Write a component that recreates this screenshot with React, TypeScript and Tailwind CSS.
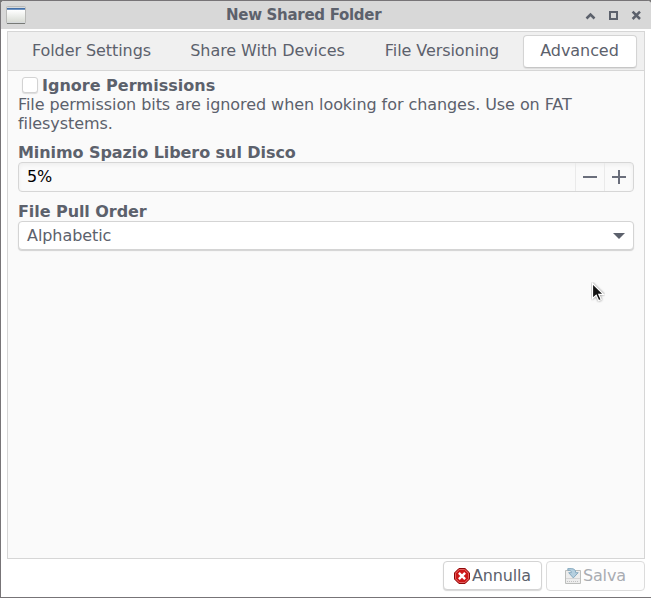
import type { ReactNode } from "react";

function WindowIcon() {
  return (
    <svg width="20" height="18" viewBox="0 0 20 18" className="block">
      <defs>
        <linearGradient id="pane" x1="0" y1="0" x2="0" y2="1">
          <stop offset="0" stopColor="#ffffff" />
          <stop offset="1" stopColor="#d9dcd5" />
        </linearGradient>
      </defs>
      <rect x="0.5" y="0.5" width="19" height="17" rx="1" fill="#d6d9dc" stroke="#b9b9b7" />
      <rect x="1" y="4" width="18" height="12" fill="url(#pane)" />
      <rect x="1" y="2" width="18" height="1" fill="#426fa8" />
      <rect x="1" y="3" width="18" height="1" fill="#6f93c2" />
      <path d="M1 17.5H19" stroke="#777a76" />
    </svg>
  );
}

function TitleBar() {
  return (
    <header className="relative flex h-[28px] shrink-0 items-center justify-between bg-[#d8d8d8] pl-[5px] pr-[8px] text-[#5c616c]">
      <WindowIcon />
      <h1 className="absolute left-[225px] top-[4px] whitespace-nowrap text-[15px] font-bold leading-[20px] tracking-[-0.3px]">
        New Shared Folder
      </h1>
      <svg width="58" height="12" viewBox="0 0 58 12" fill="none" stroke="#5c616c">
        <path d="M1.5 9.5 5.5 5.5 9.5 9.5" strokeWidth="2.5" />
        <rect x="25" y="3" width="7" height="7" strokeWidth="2" />
        <path d="M47.6 2.6 55 10M55 2.6 47.6 10" strokeWidth="2.5" />
      </svg>
    </header>
  );
}

function Tab({ label, active, width }: { label: string; active?: boolean; width: string }) {
  return (
    <button
      className={`${width} flex h-[33px] items-center justify-center whitespace-nowrap rounded-[4px] border pb-[1px] pr-[1px] tracking-[-0.07px] ${
        active ? "border-[#d4d4d4] border-b-[#c6c6c6] bg-white shadow-[0_1px_1px_rgba(0,0,0,0.08)]" : "border-transparent"
      }`}
    >
      {label}
    </button>
  );
}

function Label({ children }: { children: ReactNode }) {
  return <div className="h-[19px] whitespace-nowrap font-bold leading-[19px]">{children}</div>;
}

function CancelIcon() {
  return (
    <svg width="16" height="16" viewBox="0 0 16 16" className="shrink-0">
      <path d="M4.9.5h6.2l4.4 4.4v6.2l-4.4 4.4H4.9L.5 11.1V4.9z" fill="#cc1717" stroke="#8e0808" />
      <path d="M5.3 1.5h5.4l3.8 3.8v5.4l-3.8 3.8H5.3l-3.8-3.8V5.3z" fill="none" stroke="#e46b6b" strokeWidth=".9" />
      <path d="m4.9 4.9 6.2 6.2m0-6.2-6.2 6.2" stroke="#fff" strokeWidth="2.4" />
    </svg>
  );
}

function SaveIcon() {
  return (
    <svg width="16" height="16" viewBox="0 0 16 16" className="shrink-0">
      <path d="M.5 2.5h15v13H.5z" fill="#ededed" stroke="#bcbebc" />
      <path d="M1 10.5h14" stroke="#d6d6d6" />
      <path d="M2 13.5h12" stroke="#c2c2c2" strokeDasharray="1 1" />
      <path d="M2.8.6h3.4c3 0 4.5 1.4 4.5 4.1h2.5L8.3 9.9 3.7 4.7h2.6c0-1.9-1-2.7-3.5-2.4z" fill="#b5cfdf" stroke="#7fa5bc" strokeWidth=".9" />
    </svg>
  );
}

export default function App() {
  return (
    <div className="h-[598px] w-[651px] overflow-hidden bg-[#777]">
      <main className="relative flex h-[598px] w-[651px] flex-col overflow-hidden rounded-t-[4px] border-y border-l border-[#777477] bg-white font-['DejaVu_Sans',sans-serif] text-[16px] tracking-[-0.07px] text-[#5c616c]">
        <TitleBar />
        <section className="ml-[6px] mt-[2px] flex h-[528px] w-[638px] flex-col border border-[#d6d6d6] bg-[#fafafa]">
          <nav className="flex h-[39px] shrink-0 gap-[6px] border-b border-[#d6d6d6] bg-[#f0f0f0] pl-[8px] pt-[3px]">
            <Tab label="Folder Settings" width="w-[152px]" />
            <Tab label="Share With Devices" width="w-[188px]" />
            <Tab label="File Versioning" width="w-[149px]" />
            <Tab label="Advanced" width="w-[114px]" active />
          </nav>
          <div className="flex flex-col px-[10px] pt-[5px]">
            <label className="flex h-[19px] items-center whitespace-nowrap font-bold leading-[19px] tracking-normal">
              <span className="mb-[2px] ml-[4px] mr-[4px] h-[16px] w-[16px] rounded-[3px] border border-[#d3d3d3] bg-white shadow-[0_1px_1px_rgba(0,0,0,0.12)]" />
              Ignore Permissions
            </label>
            <p className="whitespace-nowrap leading-[19px]">
              File permission bits are ignored when looking for changes. Use on FAT
              <br />
              filesystems.
            </p>
            <div className="mt-[10px]">
              <Label>Minimo Spazio Libero sul Disco</Label>
              <div className="flex h-[30px] w-[616px] overflow-hidden rounded-[4px] border border-[#d6d6d6] bg-[#fafafa] text-black shadow-[inset_0_2px_4px_rgba(0,0,0,0.05)]">
                <span className="flex-1 pl-[8px] leading-[27px]">5%</span>
                <button className="flex w-[29px] items-center justify-center border-l border-[#eaeaea]">
                  <span className="h-[2px] w-[14px] bg-[#6a6e7b]" />
                </button>
                <button className="flex w-[29px] items-center justify-center border-l border-[#eaeaea]">
                  <svg width="14" height="14" viewBox="0 0 14 14">
                    <path d="M0 7h14M7 0v14" stroke="#6a6e7b" strokeWidth="2" />
                  </svg>
                </button>
              </div>
            </div>
            <div className="mt-[10px]">
              <Label>File Pull Order</Label>
              <div className="flex h-[29px] w-[616px] items-center justify-between rounded-[4px] border border-[#d4d4d4] bg-white pl-[8px] pr-[8px] shadow-[0_1px_1px_rgba(0,0,0,0.16)]">
                <span className="leading-[27px]">Alphabetic</span>
                <svg width="12" height="6" viewBox="0 0 12 6" className="mt-[1px]">
                  <path d="M0 0h12L6 6z" fill="#5c616c" />
                </svg>
              </div>
            </div>
          </div>
        </section>
        <footer className="flex gap-[4px] pl-[442px] pt-[2px]">
          <button className="flex h-[29px] w-[99px] items-center rounded-[4px] border border-[#d4d4d4] bg-white pl-[10px] pt-px tracking-[-0.17px] shadow-[0_1px_1px_rgba(0,0,0,0.16)]">
            <CancelIcon />
            <span className="ml-[2px] leading-[26px]">Annulla</span>
          </button>
          <button disabled className="flex h-[30px] w-[99px] items-center rounded-[4px] border border-[#dcdcdc] bg-[#fdfdfd] pl-[18px] tracking-[-0.17px] text-[#a9acb2]">
            <SaveIcon />
            <span className="ml-[2px] leading-[26px]">Salva</span>
          </button>
        </footer>
        <svg className="absolute left-[590px] top-[281px]" width="14" height="21" viewBox="0 0 14 21">
          <path d="M1.5 1.5v15l3.7-3.3 2.5 5.5 2.5-1.2-2.4-5.2h4.7z" fill="#141414" stroke="#fff" strokeWidth="1.2" className="drop-shadow-[0_0_1px_rgba(0,0,0,0.5)]" />
        </svg>
      </main>
    </div>
  );
}
